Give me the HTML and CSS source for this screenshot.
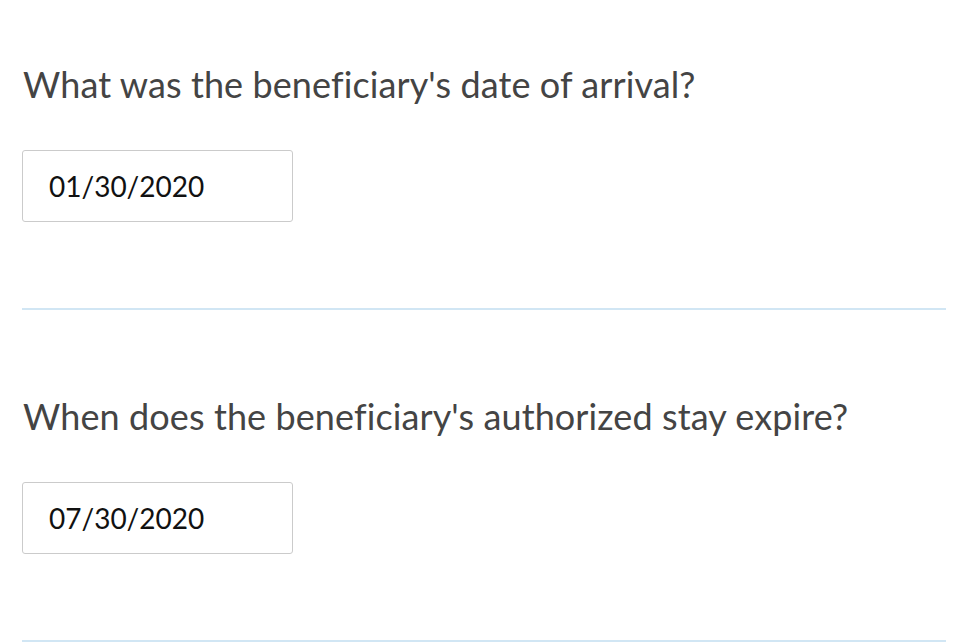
FILE: index.html
```html
<!DOCTYPE html>
<html lang="en">
<head>
<meta charset="utf-8">
<title>Beneficiary dates</title>
<link rel="stylesheet" href="styles.css">
</head>
<body>
<main class="form">
  <section class="question">
    <label class="question-label" for="arrival">What was the beneficiary's date of arrival?</label>
    <input class="date-input" id="arrival" type="text" value="01/30/2020">
  </section>
  <hr class="divider">
  <section class="question question--next">
    <label class="question-label" for="expire">When does the beneficiary's authorized stay expire?</label>
    <input class="date-input" id="expire" type="text" value="07/30/2020">
  </section>
  <hr class="divider">
</main>
</body>
</html>
```
FILE: styles.css
```css
html, body {
  margin: 0;
  padding: 0;
  background: #ffffff;
}

.form {
  padding: 62px 12px 0 22px;
  display: flex;
  flex-direction: column;
}

.question {
  display: flex;
  flex-direction: column;
  align-items: flex-start;
}

.question--next {
  margin-top: 84px;
}

.question-label {
  font-family: "Lato", "Liberation Sans", sans-serif;
  font-size: 36px;
  line-height: 44px;
  color: #444444;
  padding-left: 1px;
  white-space: nowrap;
  font-variant-ligatures: none;
  letter-spacing: 0.1px;
}

.date-input {
  box-sizing: border-box;
  margin: 44px 0 0 0;
  width: 271px;
  height: 72px;
  padding: 0 0 0 26px;
  border: 1.5px solid #cbcbcb;
  border-radius: 3px;
  background: #ffffff;
  font-family: "Lato", "Liberation Sans", sans-serif;
  font-size: 28px;
  color: #111111;
  outline: none;
}

.divider {
  margin: 86px 0 0 0;
  border: 0;
  height: 2px;
  background: #d1e6f4;
}
```
